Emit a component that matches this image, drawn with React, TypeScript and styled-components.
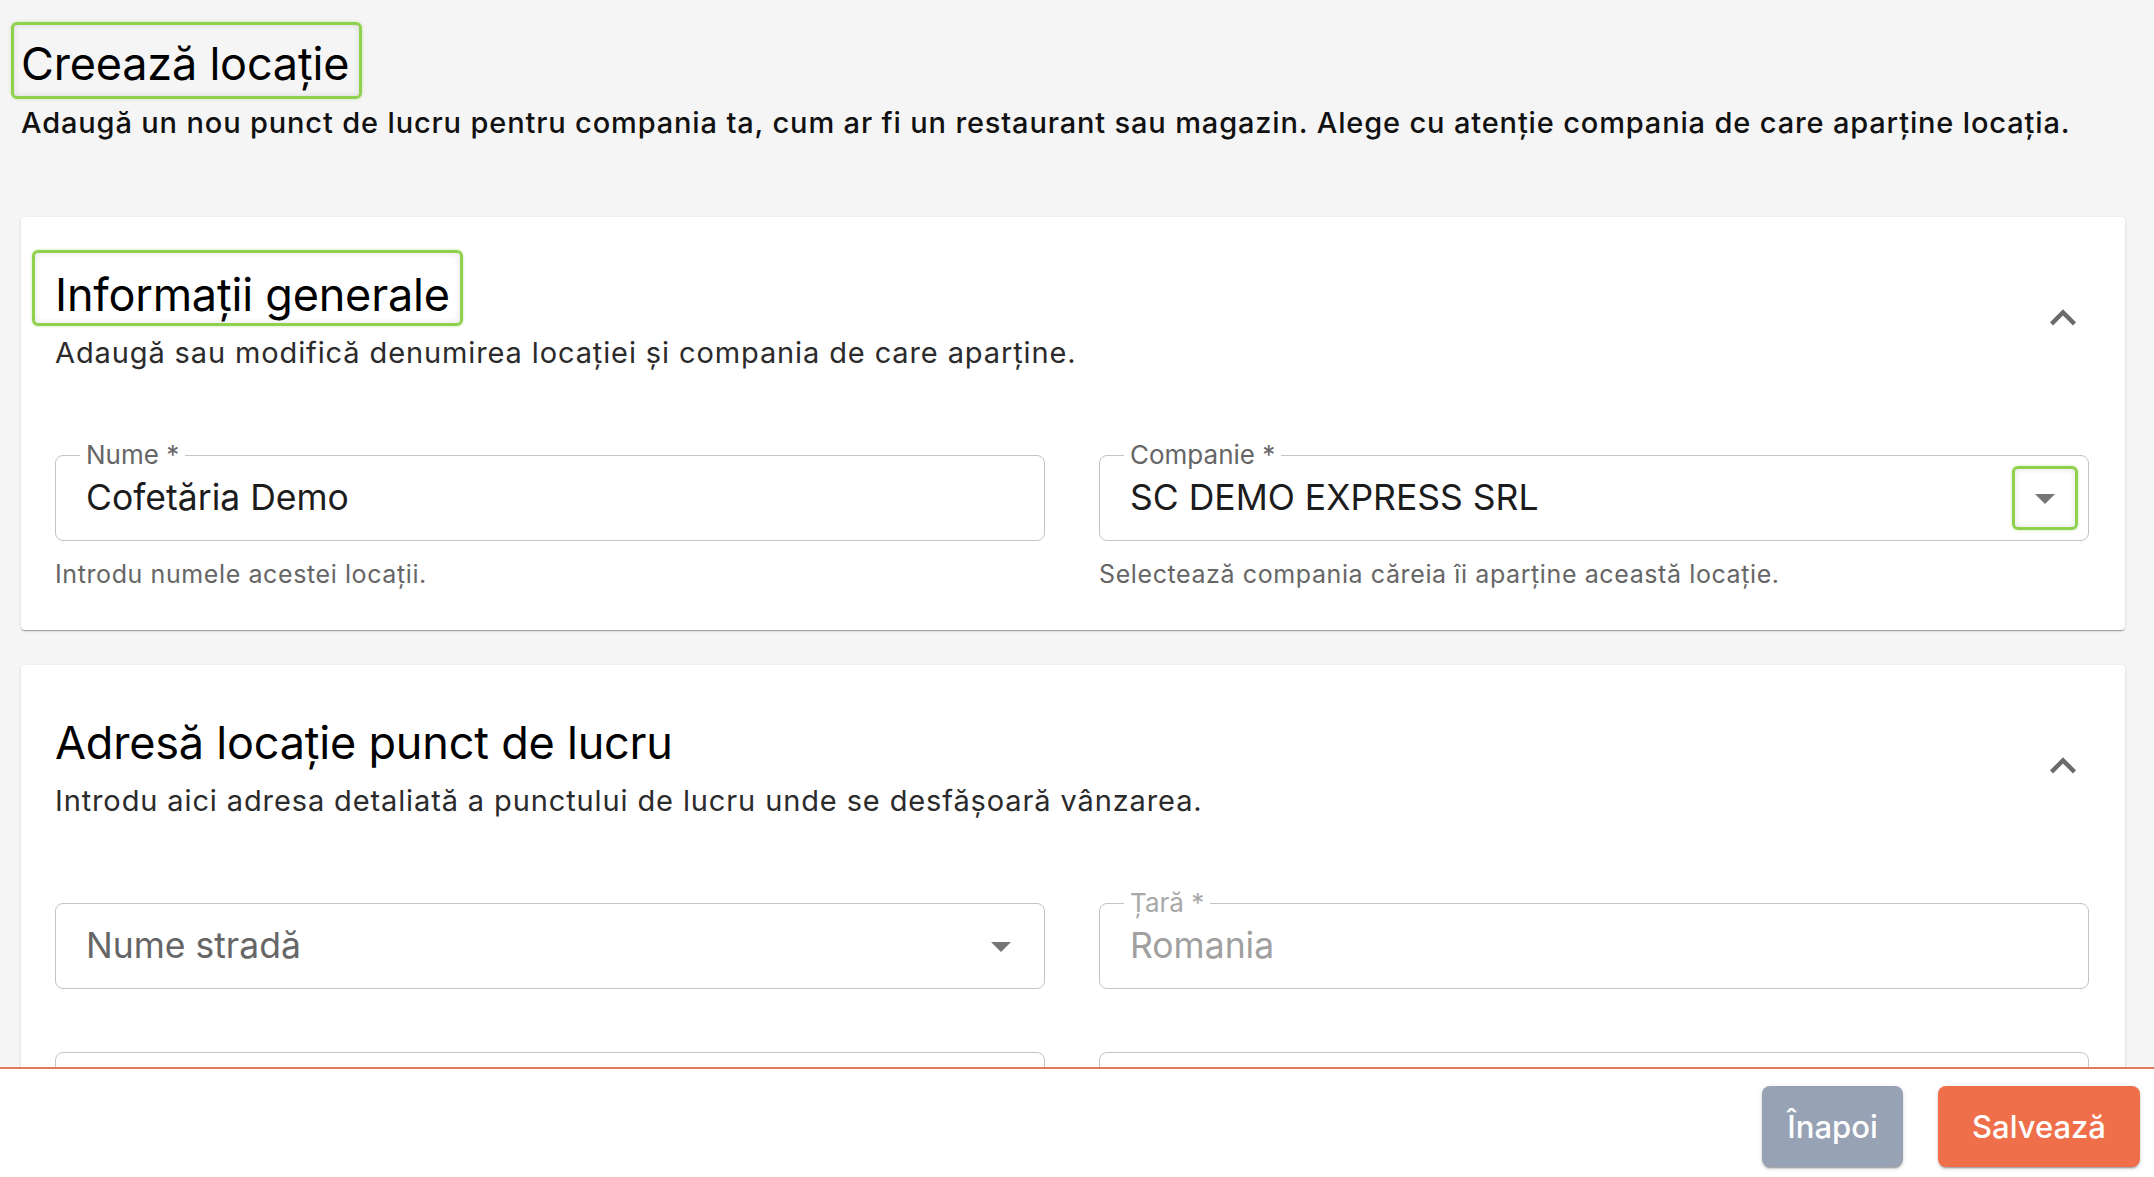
import React from "react";
import styled, { createGlobalStyle, css } from "styled-components";

const GlobalStyle = createGlobalStyle`
  html, body {
    margin: 0;
    padding: 0;
    background: #f5f5f5;
    font-family: Inter, "Noto Sans", "Liberation Sans", sans-serif;
    color: #111;
  }
  * { box-sizing: border-box; }
`;

const Page = styled.main`
  padding: 22px 29px 140px 21px;
  min-height: 100vh;
`;

const highlight = css`
  border: 3px solid #8fd14f;
  border-radius: 6px;
  box-shadow: 0 0 3px rgba(143, 209, 79, 0.55), inset 0 0 6px rgba(0, 0, 0, 0.12);
`;

const PageHeader = styled.header`
  display: flex;
  flex-direction: column;
  align-items: flex-start;
`;

const PageTitle = styled.h1`
  ${highlight};
  margin: 0 0 0 -10px;
  padding: 6px 10px 0 7px;
  font-size: 45px;
  line-height: 65px;
  font-weight: 400;
  color: #000;
  letter-spacing: -0.2px;
`;

const PageLead = styled.p`
  margin: 7px 0 0;
  font-size: 29px;
  line-height: 34px;
  font-weight: 500;
  letter-spacing: 0.85px;
  color: #111;
`;

const Card = styled.section<{ $first?: boolean }>`
  background: #fff;
  border-radius: 4px;
  margin-top: ${(p) => (p.$first ? 77 : 35)}px;
  padding: 33px 36px 42px 34px;
  box-shadow: 0 2px 1px -1px rgba(0, 0, 0, 0.2), 0 1px 1px 0 rgba(0, 0, 0, 0.14),
    0 1px 3px 0 rgba(0, 0, 0, 0.12);
`;

const CardHeader = styled.div`
  display: flex;
  justify-content: space-between;
  align-items: center;
`;

const CardHeading = styled.div`
  display: flex;
  flex-direction: column;
  align-items: flex-start;
`;

const CardTitle = styled.h2<{ $marked?: boolean }>`
  ${highlight};
  ${(p) =>
    !p.$marked &&
    css`
      border-color: transparent;
      box-shadow: none;
    `}
  margin: 0 0 0 -23px;
  padding: 13px 10px 0 20px;
  font-size: 45px;
  line-height: 57px;
  font-weight: 400;
  color: #000;
  letter-spacing: -0.2px;
`;

const CardLead = styled.p`
  margin: 10px 0 0;
  font-size: 29px;
  line-height: 34px;
  font-weight: 400;
  letter-spacing: 0.88px;
  color: #2b2b2b;
`;

const CollapseButton = styled.button`
  width: 52px;
  height: 52px;
  margin-top: 16px;
  padding: 0;
  border: none;
  background: transparent;
  display: flex;
  align-items: center;
  justify-content: center;
  color: #6b6b6b;
  cursor: pointer;
  svg {
    width: 52px;
    height: 52px;
    fill: currentColor;
  }
`;

const FieldGrid = styled.div<{ $rowGap?: number }>`
  margin-top: 85px;
  display: grid;
  grid-template-columns: 1fr 1fr;
  column-gap: 54px;
  row-gap: ${(p) => p.$rowGap ?? 0}px;
`;

const FieldColumn = styled.div`
  display: flex;
  flex-direction: column;
`;

const FieldBox = styled.div`
  position: relative;
  height: 86px;
  border: 1.5px solid #c4c4c4;
  border-radius: 8px;
  display: flex;
  align-items: center;
  padding: 0 10px 0 30px;
  background: #fff;
`;

const FieldLabel = styled.span<{ $disabled?: boolean }>`
  position: absolute;
  top: -16px;
  left: 24px;
  padding: 0 6px;
  background: #fff;
  font-size: 26px;
  line-height: 30px;
  color: ${(p) => (p.$disabled ? "#a8a8a8" : "#666")};
`;

const FieldValue = styled.span<{ $tone?: "value" | "placeholder" | "disabled" }>`
  flex: 1;
  font-size: 35.5px;
  line-height: 44px;
  color: ${(p) =>
    p.$tone === "placeholder" ? "#666" : p.$tone === "disabled" ? "#a0a0a0" : "#1c1c1c"};
  white-space: nowrap;
`;

const Adornment = styled.span<{ $marked?: boolean }>`
  width: 66px;
  height: 64px;
  display: flex;
  align-items: center;
  justify-content: center;
  border-radius: 6px;
  border: 3px solid transparent;
  color: #757575;
  ${(p) => p.$marked && highlight};
  svg {
    width: 48px;
    height: 48px;
    fill: currentColor;
  }
`;

const HelperText = styled.span`
  margin-top: 19px;
  font-size: 25px;
  line-height: 28px;
  letter-spacing: 0.6px;
  color: #666;
`;

const Footer = styled.footer`
  position: fixed;
  left: 0;
  right: 0;
  bottom: 0;
  height: 110px;
  background: #fff;
  border-top: 2px solid #e07b5a;
  display: flex;
  justify-content: flex-end;
  align-items: flex-start;
  gap: 35px;
  padding: 17px 14px 0 0;
`;

const ActionButton = styled.button<{ $variant: "back" | "save" }>`
  height: 81px;
  min-width: ${(p) => (p.$variant === "save" ? 202 : 141)}px;
  padding: 0 24px;
  border: none;
  border-radius: 8px;
  font-family: inherit;
  font-size: 31px;
  font-weight: 500;
  color: #fff;
  background: ${(p) => (p.$variant === "save" ? "#ef6f4a" : "#97a2b4")};
  box-shadow: 0 3px 1px -2px rgba(0, 0, 0, 0.2), 0 2px 2px 0 rgba(0, 0, 0, 0.14),
    0 1px 5px 0 rgba(0, 0, 0, 0.12);
  cursor: pointer;
`;

const ExpandLess = () => (
  <svg viewBox="0 0 24 24" aria-hidden="true">
    <path d="M12 8l-6 6 1.41 1.41L12 10.83l4.59 4.58L18 14z" />
  </svg>
);

const ArrowDropDown = () => (
  <svg viewBox="0 0 24 24" aria-hidden="true">
    <path d="M7 10l5 5 5-5z" />
  </svg>
);

type FieldProps = {
  label?: string;
  value?: string;
  tone?: "value" | "placeholder" | "disabled";
  select?: boolean;
  markedArrow?: boolean;
  helper?: string;
};

const Field = ({ label, value, tone = "value", select, markedArrow, helper }: FieldProps) => (
  <FieldColumn>
    <FieldBox>
      {label && <FieldLabel $disabled={tone === "disabled"}>{label}</FieldLabel>}
      <FieldValue $tone={tone}>{value}</FieldValue>
      {select && (
        <Adornment $marked={markedArrow}>
          <ArrowDropDown />
        </Adornment>
      )}
    </FieldBox>
    {helper && <HelperText>{helper}</HelperText>}
  </FieldColumn>
);

type SectionProps = {
  title: string;
  lead: string;
  marked?: boolean;
  first?: boolean;
  children: React.ReactNode;
};

const Section = ({ title, lead, marked, first, children }: SectionProps) => (
  <Card $first={first}>
    <CardHeader>
      <CardHeading>
        <CardTitle $marked={marked}>{title}</CardTitle>
        <CardLead>{lead}</CardLead>
      </CardHeading>
      <CollapseButton aria-label="Restrânge">
        <ExpandLess />
      </CollapseButton>
    </CardHeader>
    {children}
  </Card>
);

export default function App() {
  return (
    <>
      <GlobalStyle />
      <Page>
        <PageHeader>
          <PageTitle>Creează locație</PageTitle>
          <PageLead>
            Adaugă un nou punct de lucru pentru compania ta, cum ar fi un restaurant sau magazin.
            Alege cu atenție compania de care aparține locația.
          </PageLead>
        </PageHeader>

        <Section
          first
          marked
          title="Informații generale"
          lead="Adaugă sau modifică denumirea locației și compania de care aparține."
        >
          <FieldGrid>
            <Field label="Nume *" value="Cofetăria Demo" helper="Introdu numele acestei locații." />
            <Field
              label="Companie *"
              value="SC DEMO EXPRESS SRL"
              select
              markedArrow
              helper="Selectează compania căreia îi aparține această locație."
            />
          </FieldGrid>
        </Section>

        <Section
          title="Adresă locație punct de lucru"
          lead="Introdu aici adresa detaliată a punctului de lucru unde se desfășoară vânzarea."
        >
          <FieldGrid $rowGap={63}>
            <Field value="Nume stradă" tone="placeholder" select />
            <Field label="Țară *" value="Romania" tone="disabled" />
            <Field value="" />
            <Field value="" />
            <Field value="" />
            <Field value="" />
          </FieldGrid>
        </Section>
      </Page>

      <Footer>
        <ActionButton $variant="back">Înapoi</ActionButton>
        <ActionButton $variant="save">Salvează</ActionButton>
      </Footer>
    </>
  );
}
